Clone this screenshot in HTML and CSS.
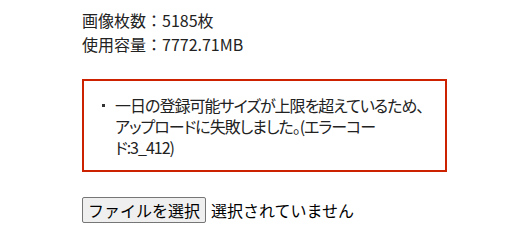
FILE: index.html
```html
<!DOCTYPE html>
<html>
	<head>
		<link rel="stylesheet" href="styles.css">
	</head>
	<body>
	<div class="upload">
		<div class="stats">
			<div>画像枚数：5185枚</div>
			<div>使用容量：7772.71MB</div>
		</div>
		<div class="error_box">
			<ul>
				<li>一日の登録可能サイズが上限を超えているため、アップロードに失敗しました。(エラーコード:3_412)</li>
			</ul>
		</div>
		<div class="file_row">
			<span class="file_btn">ファイルを選択</span>
			<span class="file_name">選択されていません</span>
		</div>
	</div>
	</body>
</html>
```

FILE: styles.css
```css
body{
	margin: 0;
	font-family: "Noto Sans CJK JP", "Noto Sans", sans-serif;
	font-size: 16px;
	color: #222;
	background: #fff;
}
.upload{
	padding: 8px 0 0 82px;
}
.stats{
	line-height: 24px;
}
.error_box{
	width: 365px;
	box-sizing: border-box;
	margin-top: 23px;
	border: 2px solid #cc2200;
	padding: 14px 20px 12px 31px;
}
.error_box ul{
	margin: 0;
	padding: 0;
	list-style: none;
}
.error_box li{
	position: relative;
	line-height: 21px;
	font-feature-settings: "palt";
	letter-spacing: -1px;
}
.error_box li::before{
	content: "";
	position: absolute;
	left: -13px;
	top: 9px;
	width: 3px;
	height: 3px;
	background: #333;
}
.file_row{
	margin-top: 25px;
	display: flex;
	align-items: center;
}
.file_btn{
	display: inline-block;
	height: 26px;
	box-sizing: border-box;
	padding: 0 5px;
	line-height: 24px;
	background: #efefef;
	border: 1px solid #767676;
	border-radius: 2px;
	color: #000;
}
.file_name{
	margin-left: 5px;
	color: #000;
}
```
